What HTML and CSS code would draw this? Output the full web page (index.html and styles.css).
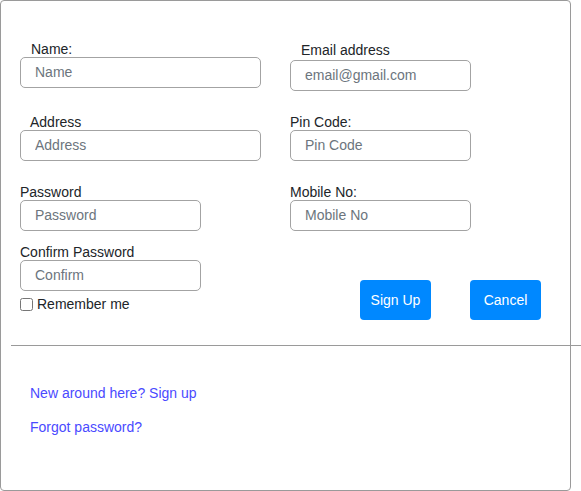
FILE: index.html
```html
<!DOCTYPE html>
<html>
<head>
<meta charset="utf-8">
<link rel="stylesheet" href="styles.css">
</head>
<body>
<div class="card">
  <form class="form">
    <div class="row row-1">
      <div class="field">
        <label class="label indent-11">Name:</label>
        <input class="input wide" type="text" placeholder="Name">
      </div>
      <div class="field field-email">
        <label class="label indent-11">Email address</label>
        <input class="input narrow gap-2" type="email" placeholder="email@gmail.com">
      </div>
    </div>
    <div class="row row-2">
      <div class="field">
        <label class="label indent-10">Address</label>
        <input class="input wide" type="text" placeholder="Address">
      </div>
      <div class="field">
        <label class="label">Pin Code:</label>
        <input class="input narrow" type="text" placeholder="Pin Code">
      </div>
    </div>
    <div class="row row-3">
      <div class="field">
        <label class="label">Password</label>
        <input class="input narrow" type="password" placeholder="Password">
      </div>
      <div class="field">
        <label class="label">Mobile No:</label>
        <input class="input narrow" type="text" placeholder="Mobile No">
      </div>
    </div>
    <div class="row row-4">
      <div class="field">
        <label class="label">Confirm Password</label>
        <input class="input narrow" type="password" placeholder="Confirm">
        <label class="check">
          <input class="checkbox" type="checkbox">
          <span>Remember me</span>
        </label>
      </div>
      <div class="actions">
        <button type="button" class="btn">Sign Up</button>
        <button type="button" class="btn">Cancel</button>
      </div>
    </div>
  </form>
  <div class="divider"></div>
  <div class="links">
    <a class="link" href="#">New around here? Sign up</a>
    <a class="link link-second" href="#">Forgot password?</a>
  </div>
</div>
</body>
</html>
```
FILE: styles.css
```css
html, body {
  margin: 0;
  padding: 0;
  background: #fff;
}

body {
  font-family: "Liberation Sans", Arial, sans-serif;
  font-size: 14px;
  line-height: 16px;
  color: #212529;
}

.card {
  box-sizing: border-box;
  width: 571px;
  height: 491px;
  border: 1px solid #9a9a9a;
  border-radius: 4px;
  padding: 40px 0 0 19px;
}

.row {
  display: grid;
  grid-template-columns: 270px 1fr;
  align-items: start;
}

.row-2 { margin-top: 23px; }
.row-3 { margin-top: 23px; }
.row-4 { margin-top: 13px; }

.field {
  display: flex;
  flex-direction: column;
  align-items: flex-start;
}

.field-email { margin-top: 1px; }

.label {
  display: block;
  height: 16px;
}

.indent-11 { margin-left: 11px; }
.indent-10 { margin-left: 10px; }

.input {
  box-sizing: border-box;
  height: 31px;
  margin: 0;
  padding: 0 14px 2px;
  border: 1px solid #a3a3a3;
  border-radius: 5px;
  font-family: "Liberation Sans", Arial, sans-serif;
  font-size: 14px;
  color: #495057;
  background: #fff;
  outline: none;
}

.input::placeholder {
  color: #6c757d;
  opacity: 1;
}

.wide { width: 241px; }
.narrow { width: 181px; }
.gap-2 { margin-top: 2px; }

.check {
  display: flex;
  align-items: center;
  margin-top: 6px;
  height: 14px;
}

.checkbox {
  width: 13px;
  height: 13px;
  margin: 0 4px 0 0;
}

.actions {
  display: flex;
  margin-top: 36px;
  padding-left: 70px;
  gap: 39px;
}

.btn {
  box-sizing: border-box;
  width: 71px;
  height: 40px;
  border: 0;
  border-radius: 4px;
  background: #0088ff;
  color: #fff;
  font-family: "Liberation Sans", Arial, sans-serif;
  font-size: 14px;
  padding: 0;
}

.divider {
  width: 571px;
  height: 1px;
  margin: 25px 0 0 -9px;
  background: #9a9a9a;
}

.links {
  display: flex;
  flex-direction: column;
  align-items: flex-start;
  padding-top: 39px;
  padding-left: 10px;
}

.link {
  color: #4a4aff;
  text-decoration: none;
}

.link-second { margin-top: 18px; }
```
